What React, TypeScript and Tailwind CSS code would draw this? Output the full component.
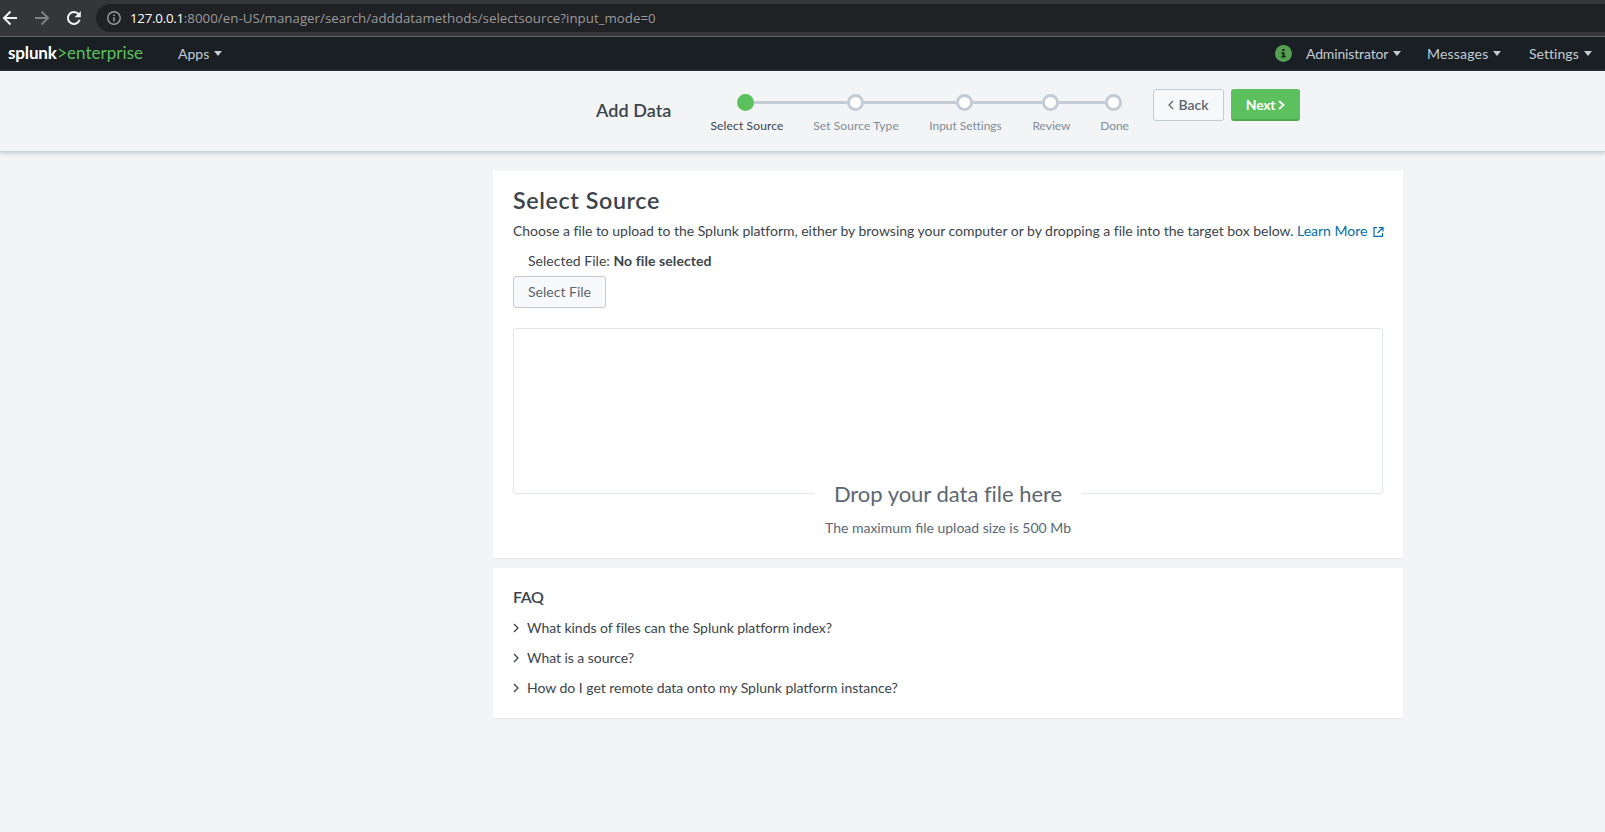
import React from 'react';

type Step = { label: string; box: string; text: string; active?: boolean };

const steps: Step[] = [
  { label: 'Select Source', box: 'w-[103px]', text: 'pl-px tracking-[0.144px]', active: true },
  { label: 'Set Source Type', box: 'w-[116px]', text: 'tracking-[0.096px]' },
  { label: 'Input Settings', box: 'w-[103px]', text: 'tracking-[-0.059px]' },
  { label: 'Review', box: 'w-[69px]', text: '' },
  { label: 'Done', box: 'w-[57px]', text: 'tracking-[-0.1px]' },
];

const questions = [
  { text: 'What kinds of files can the Splunk platform index?', cls: 'tracking-[-0.045px]' },
  { text: 'What is a source?', cls: 'tracking-[-0.05px]' },
  { text: 'How do I get remote data onto my Splunk platform instance?', cls: 'tracking-[-0.02px]' },
];

function BrowserBar() {
  return (
    <div className="flex h-[37px] shrink-0 border-b border-[#626366] bg-[#35363a] pt-1">
      <div className="flex w-[96px] shrink-0 pb-1">
        <svg width="96" height="28" viewBox="0 0 96 28" fill="none">
          <g stroke="#f1f3f4" strokeWidth="2">
            <path d="M17 14H4.5" />
            <path d="M10.5 7.5L4 14l6.500 6.500" />
          </g>
          <g stroke="#7f8083" strokeWidth="2">
            <path d="M35 14h12.500" />
            <path d="M41.500 7.500L48 14l-6.500 6.500" />
          </g>
          <path d="M78.600 10.200A6 6 0 1 0 79.600 15.800" stroke="#f1f3f4" strokeWidth="2" />
          <path d="M80.800 7v6.200h-6.200z" fill="#f1f3f4" />
        </svg>
      </div>
      <div className="flex h-7 flex-1 items-center rounded-l-full bg-[#202124] pl-[11px]">
        <svg width="14" height="14" viewBox="0 0 14 14" fill="none">
          <circle cx="7" cy="7" r="6.200" stroke="#9aa0a6" strokeWidth="1.400" />
          <path d="M7 6.200v4.300M7 3.500v1.500" stroke="#9aa0a6" strokeWidth="1.500" />
        </svg>
        <div className="ml-[9px] whitespace-nowrap font-['Open_Sans',sans-serif] text-[13.3px] leading-5 text-[#9a9b9d]">
          <span className="tracking-[-0.25px] text-white">127.0.0.1</span>
          <span className="tracking-[0.015px]">:8000/en-US/manager/search/adddatamethods/selectsource?input_mode=0</span>
        </div>
      </div>
    </div>
  );
}

function Caret() {
  return (
    <svg width="8" height="5" viewBox="0 0 8 5" className="ml-[5px]">
      <path d="M0 0h8L4 5z" fill="#c3cbd4" />
    </svg>
  );
}

function MenuItem({ label, cls }: { label: string; cls: string }) {
  return (
    <button className={`flex items-center ${cls}`}>
      {label}
      <Caret />
    </button>
  );
}

function NavBar() {
  return (
    <nav className="flex h-[34px] shrink-0 items-center border-b-2 border-[#222a31] bg-[#1a1f23] pl-2 pt-px text-[14px] leading-5 text-[#c3cbd4]">
      <div className="flex w-[170px] items-center pb-px text-[17px] leading-[22px]">
        <span className="w-[50px] font-bold tracking-[-0.15px] text-white">splunk</span>
        <svg width="9" height="12" viewBox="0 0 9 12" fill="none">
          <path d="M1 2l6 4-6 4" stroke="#5cc05c" strokeWidth="1.500" />
        </svg>
        <span className="tracking-[0.04px] text-[#5cc05c]">enterprise</span>
      </div>
      <MenuItem label="Apps" cls="tracking-[0.02px]" />
      <div className="ml-auto flex items-center">
        <svg width="17" height="17" viewBox="0 0 17 17" className="mr-[14px]">
          <circle cx="8.500" cy="8.500" r="8.500" fill="#53a051" />
          <path d="M7.300 4h2.200v1.900H7.300zM6.200 7.200h3.300v4.100h1.300v1.200H6.200v-1.200h1.300V8.400H6.200z" fill="#1a1f23" />
        </svg>
        <MenuItem label="Administrator" cls="w-[121px] tracking-[-0.15px]" />
        <MenuItem label="Messages" cls="w-[102px] tracking-[0.2px]" />
        <MenuItem label="Settings" cls="w-[76px] tracking-[0.04px]" />
      </div>
    </nav>
  );
}

function Chevron({ dir, className }: { dir: 'left' | 'right'; className: string }) {
  return (
    <svg width="6" height="10" viewBox="0 0 6 10" fill="none" className={className}>
      <path d={dir === 'left' ? 'M5 1L1 5l4 4' : 'M1 1l4 4-4 4'} stroke="currentColor" strokeWidth="1.300" />
    </svg>
  );
}

function Wizard() {
  return (
    <header className="z-10 flex h-[81px] shrink-0 border-b border-[#c9d0d9] bg-[#f2f4f5] pl-[596px] pt-[18px] shadow-[0_1px_4px_rgba(60,75,95,0.25)]">
      <h1 className="mt-[9px] w-[99px] text-[18px] font-semibold leading-6 tracking-[0.05px] text-[#3c444d]">Add Data</h1>
      <ol className="mt-[5px] flex">
        {steps.map((step, i) => (
          <li key={step.label} className={`flex flex-col ${step.box}`}>
            <div className="-ml-0.5 flex items-center">
              <span className={`h-[3px] flex-1 ${i === 0 ? '' : 'bg-[#c3cbd4]'}`} />
              <span
                className={`h-[17px] w-[17px] rounded-full border-[3px] ${
                  step.active ? 'border-[#5cc05c] bg-[#5cc05c]' : 'border-[#c3cbd4] bg-white'
                }`}
              />
              <span className={`h-[3px] flex-1 ${i === steps.length - 1 ? '' : 'bg-[#c3cbd4]'}`} />
            </div>
            <span
              className={`mt-[7px] whitespace-nowrap text-center text-[12px] leading-4 ${step.text} ${
                step.active ? 'text-[#3c444d]' : 'text-[#818d99]'
              }`}
            >
              {step.label}
            </span>
          </li>
        ))}
      </ol>
      <button className="ml-[10px] flex h-8 w-[71px] items-center justify-center rounded-[3px] border border-[#c3cbd4] bg-[#f7f8fa] pb-px text-[14px] font-semibold leading-5 text-[#5c6773]">
        <Chevron dir="left" className="mr-1" />
        Back
      </button>
      <button className="ml-[7px] flex h-8 w-[69px] items-center justify-center rounded-[3px] border border-b-2 border-[#5cc05c] border-b-[#4fa84f] bg-[#5cc05c] text-[14px] font-bold leading-5 tracking-[-0.3px] text-white">
        Next
        <svg width="7" height="10" viewBox="0 0 7 10" fill="none" className="ml-[3px]">
          <path d="M1 1l4.500 4L1 9" stroke="currentColor" strokeWidth="1.800" />
        </svg>
      </button>
    </header>
  );
}

function ExternalIcon() {
  return (
    <svg width="11" height="10" viewBox="0 0 11 10" fill="none" className="ml-[6px] inline-block" stroke="#006eaa" strokeWidth="1.200">
      <path d="M4 .6H1v8.800h8.500V6" />
      <path d="M6 .6h4v3.800M10 .6L4.500 6" />
    </svg>
  );
}

function SourceCard() {
  return (
    <section className="flex h-[388px] flex-col border-b border-[#e1e6eb] bg-white px-5 pt-[15px]">
      <h2 className="text-[23.3px] font-semibold leading-7 tracking-[0.6px] text-[#3c444d]">Select Source</h2>
      <p className="mt-[7px] whitespace-nowrap leading-5 tracking-[-0.02px]">
        Choose a file to upload to the Splunk platform, either by browsing your computer or by dropping a file into the
        target box below. <span className="tracking-[-0.02px] text-[#006eaa]">Learn More</span>
        <ExternalIcon />
      </p>
      <p className="mt-[10px] pl-[15px] leading-5 tracking-[0.02px]">
        Selected File: <b className="font-bold tracking-[0.08px] text-[#3c444d]">No file selected</b>
      </p>
      <button className="mt-[5px] h-8 w-[93px] shrink-0 rounded-[3px] border border-[#c3cbd4] bg-[#f7f8fa] leading-5 text-[#5c6773]">
        Select File
      </button>
      <div className="mt-5 flex h-[166px] shrink-0 items-end justify-center rounded-[3px] border border-[#e1e6eb]">
        <div className="-mb-[14px] w-[268px] bg-white text-center text-[22px] leading-[26px] tracking-[-0.03px] text-[#5c6773]">
          Drop your data file here
        </div>
      </div>
      <p className="mt-[24px] text-center leading-5 text-[#5c6773]">The maximum file upload size is 500 Mb</p>
    </section>
  );
}

function FaqCard() {
  return (
    <section className="mt-[9px] h-[151px] border-b border-[#e1e6eb] bg-white px-5 pt-[19px]">
      <h3 className="text-[16px] font-semibold leading-5 tracking-[-0.4px] text-[#3c444d]">FAQ</h3>
      <ul className="mt-[11px] flex flex-col gap-[10px]">
        {questions.map((q) => (
          <li key={q.text} className={`flex items-center leading-5 ${q.cls}`}>
            <Chevron dir="right" className="mr-[8px] text-[#3c444d]" />
            {q.text}
          </li>
        ))}
      </ul>
    </section>
  );
}

export default function App() {
  return (
    <div className="flex h-[832px] w-[1605px] flex-col overflow-hidden bg-[#f2f4f5] font-[Lato,sans-serif] text-[14px] text-[#3c444d]">
      <BrowserBar />
      <NavBar />
      <Wizard />
      <main className="ml-[493px] mt-[19px] w-[910px]">
        <SourceCard />
        <FaqCard />
      </main>
    </div>
  );
}
